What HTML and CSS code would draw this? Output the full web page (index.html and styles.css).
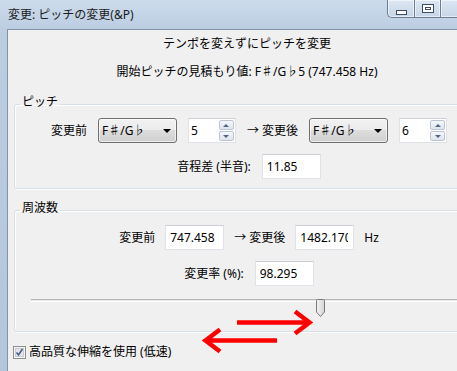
FILE: index.html
```html
<!DOCTYPE html>
<html lang="ja">
<head>
    <meta charset="UTF-8">
    <title>変更: ピッチの変更</title>
    <link rel="stylesheet" href="styles.css">
</head>
<body>
    <div class="window">
        <!-- Title bar -->
        <div class="titlebar">
            <span class="title">変更: ピッチの変更(&amp;P)</span>
            <div class="caption-buttons">
                <span class="cap min"></span>
                <span class="cap max"></span>
                <span class="cap close"></span>
            </div>
        </div>

        <div class="frame">
            <div class="client">
                <p class="heading">テンポを変えずにピッチを変更</p>
                <p class="estimate">開始ピッチの見積もり値: F♯/G♭5 (747.458 Hz)</p>

                <!-- Pitch group -->
                <fieldset class="group pitch">
                    <legend>ピッチ</legend>
                    <div class="row first">
                        <span>変更前</span>
                        <div class="combo"><span>F♯/G♭</span><i class="drop"></i></div>
                        <div class="spin">
                            <input type="text" value="5" readonly>
                            <div class="spin-buttons"><b class="up"></b><b class="down"></b></div>
                        </div>
                        <span>→ 変更後</span>
                        <div class="combo"><span>F♯/G♭</span><i class="drop"></i></div>
                        <div class="spin">
                            <input type="text" value="6" readonly>
                            <div class="spin-buttons"><b class="up"></b><b class="down"></b></div>
                        </div>
                    </div>
                    <div class="row">
                        <span>音程差 (半音):</span>
                        <input class="field" type="text" value="11.85" readonly>
                    </div>
                </fieldset>

                <!-- Frequency group -->
                <fieldset class="group freq">
                    <legend>周波数</legend>
                    <div class="row first">
                        <span>変更前</span>
                        <input class="field" type="text" value="747.458" readonly>
                        <span>→ 変更後</span>
                        <input class="field" type="text" value="1482.170" readonly>
                        <span>Hz</span>
                    </div>
                    <div class="row">
                        <span>変更率 (%):</span>
                        <input class="field" type="text" value="98.295" readonly>
                    </div>
                    <div class="slider">
                        <div class="track"></div>
                        <svg class="thumb" style="left: 284px" width="11" height="19" viewBox="0 0 11 19">
                            <defs>
                                <linearGradient id="thumbFill" x1="0" y1="0" x2="1" y2="0">
                                    <stop offset="0" stop-color="#f4f4f4"/>
                                    <stop offset="1" stop-color="#d4d4d4"/>
                                </linearGradient>
                            </defs>
                            <path d="M2.5 0.5 H8.5 Q9.5 0.5 9.5 1.5 V13 L5.5 17.5 L1.5 13 V1.5 Q1.5 0.5 2.5 0.5 Z" fill="url(#thumbFill)" stroke="#7a7a7a"/>
                        </svg>
                    </div>
                </fieldset>

                <label class="check-row">
                    <svg class="checkbox" width="13" height="13" viewBox="0 0 13 13">
                        <rect x="0.5" y="0.5" width="12" height="12" fill="#f6f6f6" stroke="#8e8f8f"/>
                        <rect x="2.5" y="2.5" width="8" height="8" fill="#e4e6ea" stroke="#c8ccd2"/>
                        <path d="M3.5 6.5 L5.5 9 L9.5 3" fill="none" stroke="#4a5d8a" stroke-width="1.6"/>
                    </svg>
                    <span>高品質な伸縮を使用 (低速)</span>
                </label>
            </div>
        </div>

        <!-- Red annotation arrows -->
        <svg class="arrows" width="457" height="371" viewBox="0 0 457 371">
            <g fill="none" stroke="#ff0000" stroke-width="4.5">
                <path d="M237 322.5 H308"/>
                <path d="M295 311.5 L309.5 322.5 L295 333.5"/>
                <path d="M277 340.5 H206"/>
                <path d="M220 329.5 L205.5 340.5 L220 351.5"/>
            </g>
        </svg>
    </div>
</body>
</html>
```

FILE: styles.css
```css
body {
    margin: 0;
    overflow: hidden;
    background: #f0f0f0;
    font-family: "Noto Sans", "Noto Sans CJK JP", sans-serif;
    font-size: 12px;
    line-height: 16px;
    color: #000;
}

.window {
    position: relative;
    width: 494px;
    height: 371px;
    overflow: hidden;
    background: linear-gradient(180deg, #ccdbec 0, #bccde2 30px, #b4c6db 100%);
}

/* title bar */
.titlebar {
    height: 29px;
    display: flex;
    justify-content: space-between;
    align-items: flex-start;
}

.title {
    padding: 7px 0 0 8px;
    color: #1b1b1b;
}

.caption-buttons {
    display: flex;
    margin-right: 8px;
}

.cap {
    box-sizing: border-box;
    height: 18px;
    border: 1px solid #6f7e92;
    border-top: none;
    background: linear-gradient(180deg, #dce7f3, #c6d5e7);
    box-shadow: inset 0 0 0 1px rgba(255, 255, 255, 0.55);
    display: flex;
    justify-content: center;
}

.cap.min {
    width: 27px;
    border-right: none;
    border-radius: 0 0 0 5px;
}

.cap.max {
    width: 27px;
}

.cap.close {
    width: 45px;
    border-left: none;
    border-radius: 0 0 5px 0;
}

.cap.min::before {
    content: "";
    box-sizing: border-box;
    width: 11px;
    height: 5px;
    margin-top: 10px;
    border: 1px solid #3f4c60;
    background: #fff;
}

.cap.max::before {
    content: "";
    box-sizing: border-box;
    width: 12px;
    height: 9px;
    margin-top: 4px;
    margin-left: 1px;
    border: 1px solid #3f4c60;
    background: #fff;
    box-shadow: inset 0 0 0 2px #fff, inset 0 0 0 3px #3f4c60;
}

/* window frame + client area */
.frame {
    height: 342px;
    padding: 0 7px;
}

.client {
    height: 100%;
    box-sizing: border-box;
    background: #f0f0f0;
    border: 1px solid #8394a9;
    border-bottom: none;
}

.heading {
    margin: 6px 0 0;
    text-align: center;
}

.estimate {
    margin: 12px 0 0;
    text-align: center;
}

/* group boxes */
.group {
    margin: 14px 6px 0;
    padding: 0 0 9px;
    border: 1px solid #d5dfe5;
    border-radius: 3px;
    box-shadow: inset 1px 1px #fff, 1px 1px #fff;
}

.group legend {
    margin-left: 5px;
    padding: 0 2px 4px;
}

.group.freq {
    margin-top: 11px;
    padding-bottom: 14px;
}

.row {
    display: flex;
    justify-content: center;
    align-items: center;
    gap: 11px;
    margin-top: 11px;
    padding-left: 4px;
    white-space: nowrap;
}

.row.first {
    margin-top: 4px;
}

.freq .row.first {
    margin-top: 5px;
    gap: 10px;
}

/* text fields */
.field,
.spin {
    box-sizing: border-box;
    height: 25px;
    background: #fff;
    border: 1px solid #dfe2e8;
    border-top-color: #cdd0d6;
}

.field {
    width: 59px;
    padding: 0 5px 0 4px;
    font: inherit;
    color: #000;
    outline: none;
}

.spin {
    width: 48px;
    display: flex;
    align-items: stretch;
}

.spin input {
    flex: 1;
    min-width: 0;
    border: none;
    padding: 0 2px;
    font: inherit;
    outline: none;
    background: transparent;
}

.spin-buttons {
    width: 15px;
    display: flex;
    flex-direction: column;
    gap: 1px;
    padding: 1px 1px 1px 0;
}

.spin-buttons b {
    flex: 1;
    display: flex;
    align-items: center;
    justify-content: center;
    border: 1px solid #bcc6d2;
    border-radius: 2px;
    background: linear-gradient(180deg, #f5f7fa, #dfe5ec);
}

.spin-buttons b::before {
    content: "";
    border-left: 3px solid transparent;
    border-right: 3px solid transparent;
}

.spin-buttons .up::before {
    border-bottom: 3px solid #4f6487;
}

.spin-buttons .down::before {
    border-top: 3px solid #4f6487;
}

/* combo boxes */
.combo {
    box-sizing: border-box;
    width: 79px;
    height: 25px;
    padding: 0 5px 0 3px;
    display: flex;
    align-items: center;
    justify-content: space-between;
    border: 1px solid #707070;
    border-radius: 3px;
    background: linear-gradient(180deg, #f2f2f2 0, #ebebeb 50%, #dddddd 50%, #cfcfcf 100%);
    box-shadow: inset 0 0 0 1px rgba(255, 255, 255, 0.6);
}

.drop {
    border-left: 4px solid transparent;
    border-right: 4px solid transparent;
    border-top: 4px solid #000;
}

/* slider */
.slider {
    position: relative;
    height: 18px;
    margin: 13px 0 0 16px;
}

.track {
    height: 1px;
    margin-top: 6px;
    background: #e7eaea;
    border-top: 1px solid #b4b4b4;
    border-bottom: 1px solid #fff;
}

.thumb {
    position: absolute;
    top: 0;
}

/* checkbox row */
.check-row {
    display: flex;
    align-items: center;
    gap: 3px;
    margin: 12px 0 0 5px;
    height: 16px;
}

.checkbox {
    flex: none;
}

/* annotation overlay */
.arrows {
    position: absolute;
    left: 0;
    top: 0;
    pointer-events: none;
}
```
